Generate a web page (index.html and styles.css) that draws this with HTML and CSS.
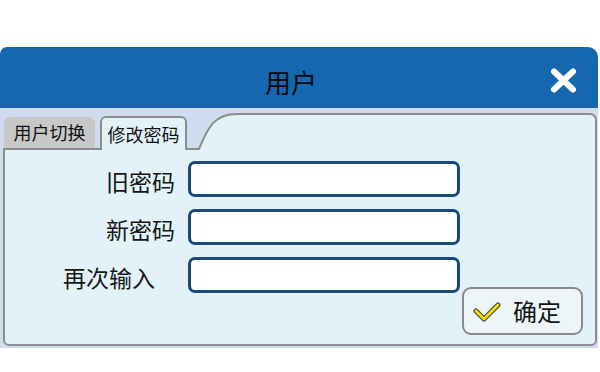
FILE: index.html
```html
<!DOCTYPE html>
<html lang="zh">
<head>
<meta charset="utf-8">
<link rel="stylesheet" href="styles.css">
</head>
<body>
<div class="window">
  <div class="titlebar">
    <div class="title">用户</div>
    <div class="close">
      <svg width="27" height="25" viewBox="0 0 27 25"><path d="M4 3.5 L23 21.5 M23 3.5 L4 21.5" stroke="#fff" stroke-width="6" stroke-linecap="round"/></svg>
    </div>
  </div>
  <div class="body">
    <div class="tabs">
      <div class="tab">用户切换</div>
      <div class="tab active">修改密码</div>
      <svg class="curve" width="50" height="37" viewBox="0 0 50 37">
        <path d="M0 37 L0 36 L12 36 C20 18 25 1 50 1 L50 37 Z" fill="#e3f2f9"/>
        <path d="M0 36 L12 36 C20 18 25 1 50 1" fill="none" stroke="#8c8c8c" stroke-width="2"/>
      </svg>
      <div class="fill"></div>
    </div>
    <div class="panel">
      <div class="form">
        <label class="label">旧密码</label><div class="input"></div>
        <label class="label">新密码</label><div class="input"></div>
        <label class="label label-wide">再次输入</label><div class="input"></div>
      </div>
      <button class="ok">
        <svg width="28" height="20" viewBox="0 0 28 20"><path d="M3 9 L11 17 L25 3" fill="none" stroke="#4a4a3a" stroke-width="5" stroke-linecap="round" stroke-linejoin="round"/><path d="M3 9 L11 17 L25 3" fill="none" stroke="#f2e400" stroke-width="2.6" stroke-linecap="round" stroke-linejoin="round"/></svg>
        <span>确定</span>
      </button>
    </div>
  </div>
</div>
</body>
</html>
```
FILE: styles.css
```css
html, body {
  margin: 0;
  padding: 0;
  background: #ffffff;
}
body {
  font-family: "Noto Sans CJK SC", "Noto Sans", sans-serif;
  color: #161616;
}
.window {
  margin-top: 47px;
  width: 598px;
}
.titlebar {
  height: 61px;
  box-sizing: border-box;
  background: #1567b0;
  border-radius: 7px 10px 0 0;
  display: flex;
  align-items: center;
  padding-top: 6px;
}
.title {
  flex: 1;
  text-align: center;
  padding-left: 32px;
  padding-top: 3px;
  font-size: 26px;
  line-height: 30px;
  color: #0a0a0a;
}
.close {
  width: 27px;
  height: 25px;
  margin-right: 21px;
  display: flex;
}
.body {
  background: #cfdcf0;
  padding-bottom: 2px;
}
.tabs {
  display: flex;
  align-items: flex-end;
  height: 40px;
  margin: 0 1px 0 3px;
}
.tab {
  width: 91px;
  height: 31px;
  box-sizing: border-box;
  margin-left: 1px;
  background: #c8c8c8;
  border-radius: 6px 6px 0 0;
  font-size: 18px;
  line-height: 30px;
  text-align: center;
  color: #111;
}
.tab.active {
  width: 87px;
  height: 34px;
  margin-left: 5px;
  margin-bottom: -2px;
  border: 2px solid #8c8c8c;
  border-bottom: none;
  background: #e3f2f9;
  position: relative;
  z-index: 1;
  line-height: 32px;
}
.curve {
  flex: none;
  margin-bottom: -2px;
  position: relative;
  z-index: 1;
  display: block;
}
.fill {
  flex: 1;
  height: 37px;
  box-sizing: border-box;
  margin-bottom: -2px;
  background: #e3f2f9;
  border-top: 2px solid #8c8c8c;
  border-right: 2px solid #8c8c8c;
  border-top-right-radius: 7px;
  position: relative;
  z-index: 1;
}
.panel {
  margin: 0 1px 0 3px;
  height: 194px;
  background: #e3f2f9;
  border: 2px solid #8c8c8c;
  border-radius: 0 0 6px 6px;
  display: flex;
}
.form {
  width: 455px;
  padding-top: 11px;
  display: grid;
  grid-template-columns: 170px 272px;
  grid-auto-rows: 36px;
  column-gap: 13px;
  row-gap: 12px;
  align-content: start;
}
.label {
  font-size: 23px;
  line-height: 36px;
  text-align: right;
  padding-top: 2px;
  color: #161616;
}
.label-wide {
  padding-right: 20px;
}
.input {
  background: #ffffff;
  border: 3px solid #1b4a77;
  border-radius: 7px;
}
.ok {
  align-self: flex-end;
  margin: 0 0 9px 2px;
  width: 121px;
  height: 48px;
  box-sizing: border-box;
  border: 2px solid #8a8a8a;
  border-radius: 9px;
  background: #edf5f9;
  display: flex;
  align-items: center;
  padding: 0 0 0 9px;
  font-family: "Noto Sans CJK SC", "Noto Sans", sans-serif;
  font-size: 24px;
  color: #141414;
}
.ok svg {
  margin-right: 12px;
  margin-top: 1px;
}
.ok span {
  line-height: 30px;
}
```
